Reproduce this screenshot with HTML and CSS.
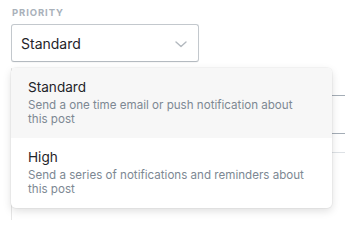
FILE: index.html
```html
<!DOCTYPE html>
<html>
<head>
<meta charset="utf-8">
<link rel="stylesheet" href="styles.css">
</head>
<body>
<div class="page">
  <div class="field">
    <div class="label">PRIORITY</div>
    <div class="select-wrap">
      <div class="select">
        <span class="select-value">Standard</span>
        <svg class="chevron" width="12" height="7" viewBox="0 0 12 7"><path d="M1 1l5 4.5L11 1" fill="none" stroke="#b3b9bf" stroke-width="1.4" stroke-linecap="round" stroke-linejoin="round"/></svg>
      </div>
      <ul class="menu">
        <li class="option active">
          <div class="opt-title">Standard</div>
          <div class="opt-desc">Send a one time email or push notification about this post</div>
        </li>
        <li class="option">
          <div class="opt-title">High</div>
          <div class="opt-desc">Send a series of notifications and reminders about this post</div>
        </li>
      </ul>
    </div>
  </div>
  <div class="panel">
    <div class="row r1"></div>
    <div class="row r2"></div>
    <div class="row r3"></div>
    <div class="row r4"></div>
  </div>
</div>
</body>
</html>
```

FILE: styles.css
```css
* { box-sizing: border-box; }
html, body { margin: 0; padding: 0; background: #ffffff; }
body { font-family: Inter, "Noto Sans", sans-serif; color: #1f2429; }
.page { width: 345px; height: 220px; overflow: hidden; }
.field { padding: 7px 0 0 11px; }
.label {
  font-size: 9.5px;
  line-height: 12px;
  font-weight: 700;
  letter-spacing: 0.9px;
  color: #a9b1ba;
  padding-left: 1px;
  margin-bottom: 5px;
}
.select-wrap { position: relative; width: 188px; }
.select {
  height: 38px;
  border: 1px solid #c3c8cd;
  border-bottom-color: #b4bac0;
  border-radius: 3px;
  display: flex;
  align-items: center;
  justify-content: space-between;
  padding: 0 11px 0 9px;
  background: #fff;
  box-shadow: 0 1px 1px rgba(0,0,0,0.04);
}
.select-value { font-size: 14px; color: #1f2429; }
.chevron { display: block; margin-top: 2px; }
.menu {
  position: absolute;
  top: 44px;
  left: 0;
  width: 321px;
  margin: 0;
  padding: 0;
  list-style: none;
  background: #fff;
  border-radius: 5px;
  overflow: hidden;
  z-index: 2;
  box-shadow: 0 0 0 1px rgba(0,0,0,0.03), 0 3px 9px rgba(0,0,0,0.13);
}
.option { padding: 9px 23px 12px 17px; }
.option.active { background: #f7f7f7; }
.opt-title { font-size: 13.6px; line-height: 20px; color: #1f2429; }
.opt-desc { font-size: 11.6px; line-height: 14px; color: #7d8893; margin-top: 1px; }
.panel {
  margin: 6px 0 0 11px;
  border-left: 1px solid #e6e6e6;
  height: 160px;
}
.row { border-bottom: 1px solid #a4adb6; }
.r1 { height: 28px; }
.r2 { height: 38px; }
.r3 { height: 19px; border-bottom-color: #dde1e5; }
.r4 { border-bottom: none; }
```
